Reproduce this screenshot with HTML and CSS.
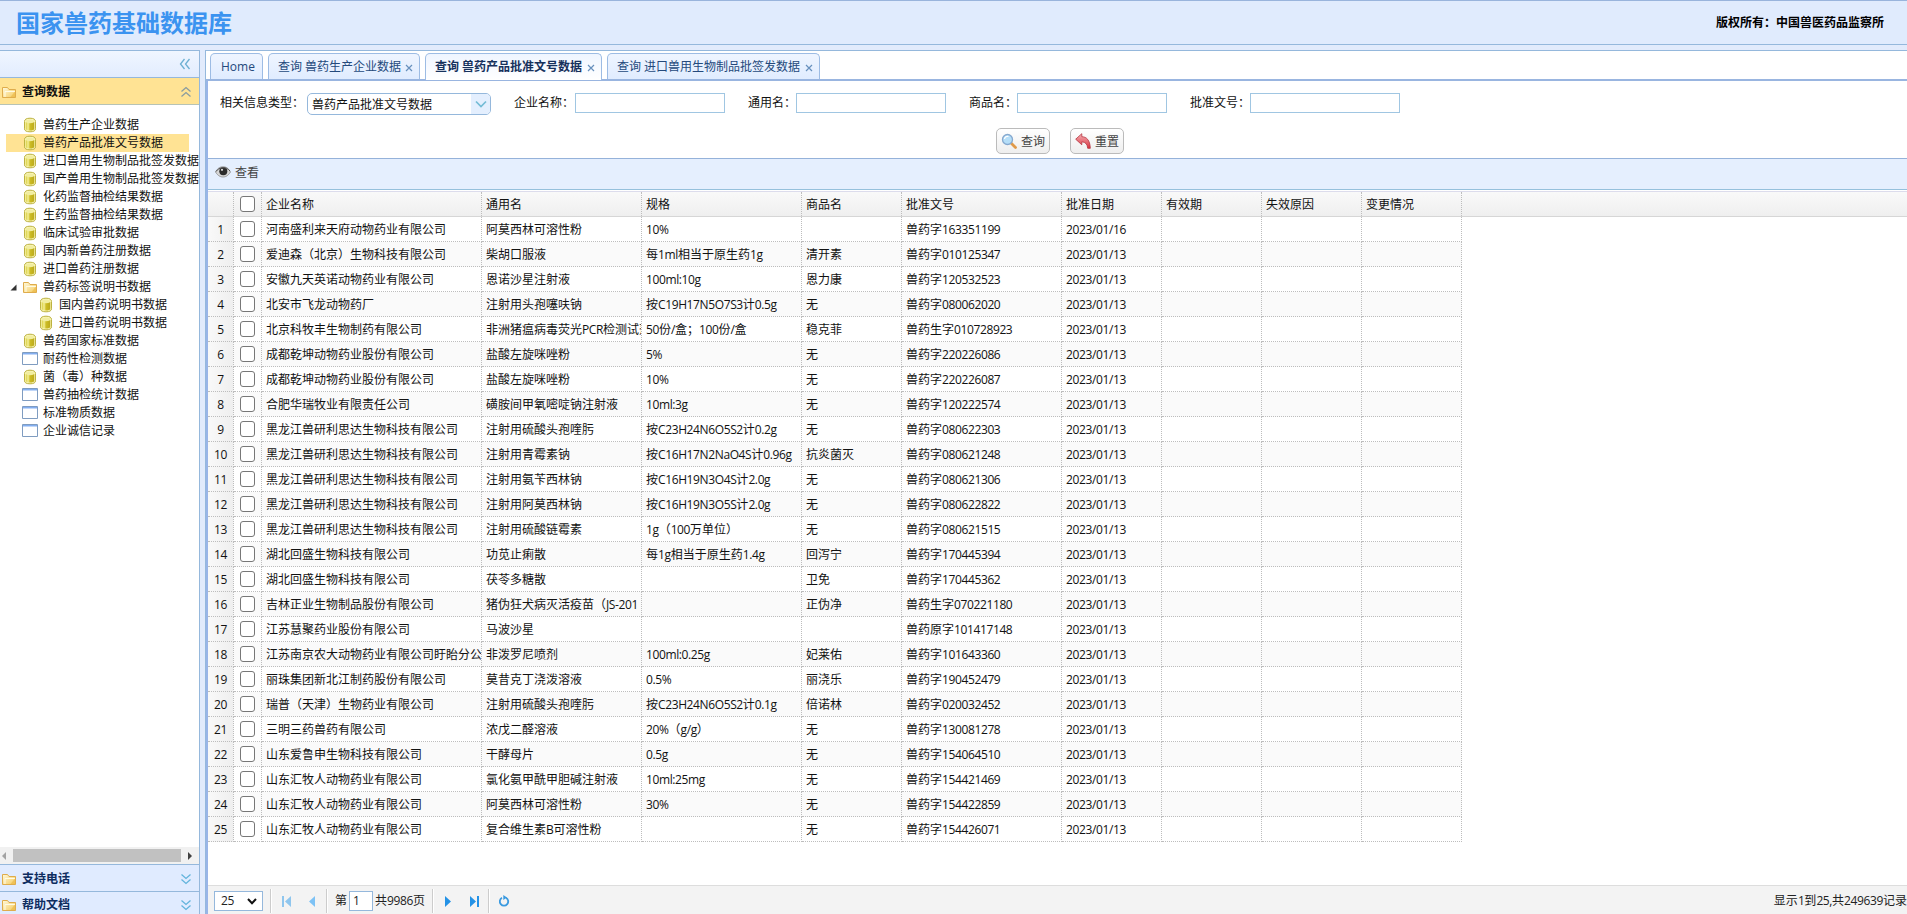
FILE: index.html
```html
<!DOCTYPE html>
<html lang="zh-CN">
<head>
<meta charset="utf-8">
<title>国家兽药基础数据库</title>
<link rel="stylesheet" href="styles.css">
</head>
<body>
<svg class="defs" aria-hidden="true">
  <defs>
    <linearGradient id="gold" x1="0" x2="1" y1="0" y2="0">
      <stop offset="0" stop-color="#d9ce3c"/><stop offset=".28" stop-color="#f3ee98"/><stop offset=".5" stop-color="#cdbd24"/><stop offset="1" stop-color="#bba91c"/>
    </linearGradient>
    <linearGradient id="paper" x1="0" x2="1" y1="0" y2="1">
      <stop offset="0" stop-color="#fff9dc"/><stop offset="1" stop-color="#f5cb5e"/>
    </linearGradient>
    <linearGradient id="red" x1="0" x2="0" y1="0" y2="1">
      <stop offset="0" stop-color="#f6b0b4"/><stop offset="1" stop-color="#d8323f"/>
    </linearGradient>
    <symbol id="db" viewBox="0 0 16 16">
      <path d="M2.500 4.500C2.500 2.300 4.500 1.200 8 1.200s5.500 1.100 5.500 3.300v7.300c0 2-2 3-5.500 3s-5.500-1-5.500-3z" fill="#faf6b8" stroke="#bdb240"/>
      <path d="M3.700 5v6.700c0 1 1.800 1.900 4.300 1.900s4.300-.9 4.300-1.900V5z" fill="url(#gold)"/>
      <ellipse cx="8" cy="4.300" rx="4.300" ry="1.900" fill="#f1eda0"/>
    </symbol>
    <symbol id="folder" viewBox="0 0 16 16">
      <path d="M1.500 13.500v-10h5l1.500 2h6.500v8z" fill="url(#paper)" stroke="#dfac4c"/>
      <path d="M4 13V7.500h10" stroke="#fffbe6" fill="none"/>
      <path d="M14 7.500L9.500 13H14z" fill="#eab544" opacity=".6"/>
    </symbol>
    <symbol id="win" viewBox="0 0 16 16">
      <path d="M.5 1.500h15v12H.5z" fill="#fff" stroke="#7f9cc0"/>
      <path d="M1 2h14v1.500H1z" fill="#83aef0"/>
    </symbol>
    <symbol id="down2" viewBox="0 0 12 12"><path d="M1.500 1.500L6 5.500l4.500-4M1.500 6.500L6 10.500l4.500-4" fill="none" stroke="#62b4dc" stroke-width="1.300"/></symbol>
    <symbol id="up2" viewBox="0 0 12 12"><path d="M1.500 5.500L6 1.500l4.500 4M1.500 10.500L6 6.500l4.500 4" fill="none" stroke="#8a9ca0" stroke-width="1.300"/></symbol>
    <symbol id="left2" viewBox="0 0 12 12"><path d="M5.500 1L1.500 6l4 5M10.500 1l-4 5 4 5" fill="none" stroke="#6cafd2" stroke-width="1.300"/></symbol>
    <symbol id="x" viewBox="0 0 8 8"><path d="M1 1l6 6M7 1L1 7" stroke="#6790bd" stroke-width="1.200"/></symbol>
  </defs>
</svg>

<header class="top">
  <h1>国家兽药基础数据库</h1>
  <div class="copy">版权所有：中国兽医药品监察所</div>
</header>

<div class="body">
  <aside class="side">
    <div class="side-head"><svg class="i12"><use href="#left2"/></svg></div>
    <div class="acc acc-on"><svg class="i16"><use href="#folder"/></svg><b>查询数据</b><svg class="i12"><use href="#up2"/></svg></div>
    <ul class="tree">
      <li><svg class="i16"><use href="#db"/></svg><span>兽药生产企业数据</span></li>
      <li class="sel"><svg class="i16"><use href="#db"/></svg><span>兽药产品批准文号数据</span></li>
      <li><svg class="i16"><use href="#db"/></svg><span>进口兽用生物制品批签发数据</span></li>
      <li><svg class="i16"><use href="#db"/></svg><span>国产兽用生物制品批签发数据</span></li>
      <li><svg class="i16"><use href="#db"/></svg><span>化药监督抽检结果数据</span></li>
      <li><svg class="i16"><use href="#db"/></svg><span>生药监督抽检结果数据</span></li>
      <li><svg class="i16"><use href="#db"/></svg><span>临床试验审批数据</span></li>
      <li><svg class="i16"><use href="#db"/></svg><span>国内新兽药注册数据</span></li>
      <li><svg class="i16"><use href="#db"/></svg><span>进口兽药注册数据</span></li>
      <li class="open"><svg class="tri" viewBox="0 0 7 7"><path d="M6.500 .5v6H.5z" fill="#333"/></svg><svg class="i16"><use href="#folder"/></svg><span>兽药标签说明书数据</span></li>
      <li class="sub"><svg class="i16"><use href="#db"/></svg><span>国内兽药说明书数据</span></li>
      <li class="sub"><svg class="i16"><use href="#db"/></svg><span>进口兽药说明书数据</span></li>
      <li><svg class="i16"><use href="#db"/></svg><span>兽药国家标准数据</span></li>
      <li><svg class="i16"><use href="#win"/></svg><span>耐药性检测数据</span></li>
      <li><svg class="i16"><use href="#db"/></svg><span>菌（毒）种数据</span></li>
      <li><svg class="i16"><use href="#win"/></svg><span>兽药抽检统计数据</span></li>
      <li><svg class="i16"><use href="#win"/></svg><span>标准物质数据</span></li>
      <li><svg class="i16"><use href="#win"/></svg><span>企业诚信记录</span></li>
    </ul>
    <div class="hscroll">
      <svg viewBox="0 0 4 8"><path d="M4 0v8L0 4z" fill="#a3a3a3"/></svg>
      <i></i>
      <svg viewBox="0 0 4 8"><path d="M0 0v8l4-4z" fill="#404040"/></svg>
    </div>
    <div class="acc"><svg class="i16"><use href="#folder"/></svg><b>支持电话</b><svg class="i12"><use href="#down2"/></svg></div>
    <div class="acc acc-last"><svg class="i16"><use href="#folder"/></svg><b>帮助文档</b><svg class="i12"><use href="#down2"/></svg></div>
  </aside>

  <main class="main">
    <nav class="tabs">
      <a class="tab home">Home</a>
      <a class="tab t2">查询 兽药生产企业数据<svg><use href="#x"/></svg></a>
      <a class="tab t3 on">查询 兽药产品批准文号数据<svg><use href="#x"/></svg></a>
      <a class="tab t4">查询 进口兽用生物制品批签发数据<svg><use href="#x"/></svg></a>
    </nav>
    <section class="panel">
      <form class="search">
        <div class="fields">
          <label class="f-type"><span>相关信息类型：</span>
            <span class="combo">兽药产品批准文号数据<i><svg viewBox="0 0 12 8"><path d="M1 1.500l5 5 5-5" fill="none" stroke="#74bcd6" stroke-width="1.700"/></svg></i></span></label>
          <label class="w4"><span>企业名称：</span><input type="text"></label>
          <label class="w3"><span>通用名：</span><input type="text"></label>
          <label class="w3"><span>商品名：</span><input type="text"></label>
          <label class="w4 w4b"><span>批准文号：</span><input type="text"></label>
        </div>
        <div class="buttons">
          <button type="button"><svg viewBox="0 0 16 16"><path d="M10 10l4.500 4.500" stroke="#e09a4a" stroke-width="2.800" stroke-linecap="round"/><circle cx="6.500" cy="6.500" r="5" fill="#b5def8" stroke="#86a9cf" stroke-width="1.300"/><path d="M3.500 6a3 3 0 0 1 4-2.500" fill="none" stroke="#fff" stroke-width="1.300"/></svg>查询</button>
          <button type="button"><svg viewBox="0 0 16 16"><path d="M.7 6.200L6.800 .7v3C11.500 3.800 15 7 15.300 15.300h-2.600C12.500 11.500 10.500 9 6.800 8.800v3z" fill="url(#red)" stroke="#b5323d" stroke-width=".8"/></svg>重置</button>
        </div>
      </form>
      <div class="toolbar">
        <svg viewBox="0 0 16 12"><path d="M.5 6C3 1.500 5.500 .8 8 .8s5 .7 7.500 5.200C13 10 10.500 11 8 11S3 10 .5 6z" fill="#d6d6d6" stroke="#8b8b8b" stroke-width=".8"/><circle cx="8.300" cy="5.200" r="4" fill="#2b2b2b"/><circle cx="7" cy="3.800" r="1.100" fill="#ddd"/><path d="M1 5.500C4 1 11 0 15 5" fill="none" stroke="#555" stroke-width="1"/></svg>
        <span>查看</span>
      </div>
      <div class="grid-head">
        <table class="grid">
          <colgroup><col class="c26"><col class="c28"><col class="c220"><col class="c160"><col class="c160"><col class="c100"><col class="c160"><col class="c100"><col class="c100"><col class="c100"><col class="c100"></colgroup>
          <tr><th></th><th class="ck"><input type="checkbox"></th><th>企业名称</th><th>通用名</th><th>规格</th><th>商品名</th><th>批准文号</th><th>批准日期</th><th>有效期</th><th>失效原因</th><th>变更情况</th></tr>
        </table>
      </div>
      <div class="grid-body">
        <table class="grid">
          <colgroup><col class="c26"><col class="c28"><col class="c220"><col class="c160"><col class="c160"><col class="c100"><col class="c160"><col class="c100"><col class="c100"><col class="c100"><col class="c100"></colgroup>
          <tbody id="rows"></tbody>
        </table>
      </div>
      <footer class="pager">
        <span class="size"><em>25</em><svg viewBox="0 0 10 7"><path d="M1 1l4 4.300L9 1" fill="none" stroke="#111" stroke-width="2"/></svg></span>
        <i class="sep"></i>
        <svg class="first" viewBox="0 0 9 11"><path d="M0 0h2v11H0zM9 0v11L3 5.500z" fill="#8fc6ee"/></svg>
        <svg class="prev" viewBox="0 0 6 11"><path d="M6 0v11L0 5.500z" fill="#7dc2f5"/></svg>
        <i class="sep"></i>
        <span class="pg">第</span><span class="num">1</span><span class="pg all">共<em>9986</em>页</span>
        <i class="sep"></i>
        <svg class="next" viewBox="0 0 6 11"><path d="M0 0v11l6-5.500z" fill="#2492e6"/></svg>
        <svg class="last" viewBox="0 0 9 11"><path d="M7 0h2v11H7zM0 0v11l6-5.500z" fill="#2492e6"/></svg>
        <i class="sep"></i>
        <svg class="reload" viewBox="0 0 12 12"><path d="M4 2.700A4.200 4.200 0 1 0 8 2.700" fill="none" stroke="#3a9ae0" stroke-width="1.800"/><path d="M5.300 0v5l3.700-2.500z" fill="#3a9ae0"/></svg>
        <span class="info">显示<em>1</em>到<em>25,</em>共<em>249639</em>记录</span>
      </footer>
    </section>
  </main>
</div>
<script src="grid.js"></script>
</body>
</html>
```

FILE: styles.css
```css
* { box-sizing: border-box; }
body {
  margin: 0;
  height: 914px;
  overflow: hidden;
  display: flex;
  flex-direction: column;
  background: #e2ebfc;
  color: #222;
  font: 12px/18px "Open Sans", "Noto Sans CJK SC", sans-serif;
}
svg { display: block; flex: none; }
em { font-style: normal; letter-spacing: -.38px; }
.defs { position: absolute; width: 0; height: 0; }
.i16 { width: 16px; height: 16px; }
.i12 { width: 12px; height: 12px; }

.top {
  height: 45px;
  flex: none;
  display: flex;
  justify-content: space-between;
  align-items: center;
  padding: 0 23px 0 16px;
  border-top: 1px solid #99b4dc;
  border-bottom: 1px solid #95b8dc;
  background: #e0ebfd;
}
.top h1 { margin: 0; font-size: 24px; line-height: 36px; font-weight: 700; color: #3b93f0; }
.copy { font-weight: 700; color: #000; }

.body { flex: 1; min-height: 0; display: flex; gap: 5px; margin-top: 5px; }

.side {
  width: 200px;
  flex: none;
  display: flex;
  flex-direction: column;
  border-top: 1px solid #95b8dc;
  border-right: 1px solid #95b8dc;
  background: #fff;
  overflow: hidden;
}
.side-head {
  height: 26px;
  flex: none;
  display: flex;
  align-items: center;
  justify-content: flex-end;
  padding-right: 8px;
  background: linear-gradient(#f0f6ff, #e2ecfe);
}
.acc {
  height: 27px;
  flex: none;
  display: flex;
  align-items: center;
  gap: 5px;
  padding: 1px 7px 0 1px;
  border-top: 1px solid #95b8dc;
  background: #e0ebff;
  color: #0e2d5f;
}
.acc b { flex: 1; font-weight: 700; }
.acc-on { height: 28px; background: #ffe394; color: #111; border-bottom: 1px solid #b7c3b5; }
.acc-last { height: 23px; padding-top: 4px; }
.tree { list-style: none; margin: 0; padding: 11px 10px 0 6px; flex: 1; min-height: 0; }
.tree li {
  height: 18px;
  display: flex;
  align-items: center;
  padding-left: 16px;
  gap: 5px;
  white-space: nowrap;
  color: #111;
}
.tree .i16 { width: 16px; }
.tree li.sub { padding-left: 32px; }
.tree li.sel { background: #ffe394; }
.tree li.open { padding-left: 4px; }
.tree li.open .tri { width: 7px; height: 7px; }
.hscroll {
  height: 17px;
  flex: none;
  display: flex;
  align-items: center;
  justify-content: space-between;
  padding: 0 7px 0 2px;
  background: #f1f1f1;
}
.hscroll svg { width: 4px; height: 8px; }
.hscroll i { width: 168px; height: 13px; margin-right: 1px; background: #c1c1c1; }

.main {
  flex: 1;
  min-width: 0;
  display: flex;
  flex-direction: column;
  border-top: 1px solid #95b8dc;
  border-left: 1px solid #95b8dc;
  background: #fff;
}
.tabs {
  height: 30px;
  flex: none;
  display: flex;
  align-items: flex-end;
  gap: 5px;
  padding-left: 4px;
  border-bottom: 2px solid #99b5e0;
}
.tab {
  height: 26px;
  display: flex;
  align-items: center;
  justify-content: space-between;
  padding: 0 6px 0 9px;
  border: 1px solid #9dbce4;
  border-bottom: 0;
  border-radius: 5px 5px 0 0;
  background: linear-gradient(#eff5ff, #e0ecff);
  color: #24497c;
  white-space: nowrap;
}
.tab svg { width: 8px; height: 8px; margin-top: 2px; }
.home { width: 53px; padding-left: 10px; }
.t2 { width: 152px; }
.t3 { width: 177px; }
.t4 { width: 213px; }
.tab.on {
  font-weight: 700;
  height: 27px;
  margin-bottom: -1px;
  background: linear-gradient(#eff5ff, #fff);
  color: #16315c;
}

.panel {
  flex: 1;
  min-height: 0;
  display: flex;
  flex-direction: column;
  border-left: 2px solid #99b5e8;
}
.search { height: 77px; flex: none; padding: 12px 0 0 12px; }
.fields { display: flex; align-items: flex-start; height: 35px; color: #111; }
.fields label { display: flex; white-space: nowrap; margin-right: 23px; }
.fields label > span:first-child { flex: none; padding-top: 1px; }
.f-type > span:first-child { width: 87px; }
.w4 > span:first-child { width: 61px; }
.w4b > span:first-child { width: 60px; }
.w3 > span:first-child { width: 48px; }
.fields input {
  width: 150px;
  height: 20px;
  padding: 0;
  border: 1px solid #a0c6e2;
  background: #fff;
}
.combo {
  width: 184px;
  height: 22px;
  display: flex;
  justify-content: space-between;
  padding-left: 4px;
  line-height: 21px;
  border: 1px solid #95b8dc;
  border-radius: 5px;
  overflow: hidden;
}
.combo i { width: 19px; display: grid; place-items: center; background: #e4effe; }
.combo svg { width: 12px; height: 8px; }
.buttons { display: flex; gap: 20px; padding-left: 776px; }
.buttons button {
  width: 54px;
  height: 26px;
  display: flex;
  align-items: center;
  gap: 4px;
  padding: 1px 0 0 4px;
  border: 1px solid #bbb;
  border-radius: 5px;
  background: linear-gradient(#fff, #eee);
  color: #444;
  font: inherit;
  white-space: nowrap;
}
.buttons svg { width: 16px; height: 16px; margin-top: -2px; }

.toolbar {
  height: 32px;
  flex: none;
  display: flex;
  align-items: center;
  gap: 4px;
  padding: 0 0 2px 7px;
  border-top: 1px solid #95b2da;
  border-bottom: 1px solid #95c0dc;
  background: #e5effe;
  color: #444;
}
.toolbar svg { width: 16px; height: 12px; margin-top: -3px; }

.grid-head {
  height: 26px;
  flex: none;
  margin-top: 1px;
  border-top: 1px solid #dcdcec;
  border-bottom: 1px solid #d6d6d6;
  background: linear-gradient(#f9f9f9, #efefef);
}
.grid-body { flex: 1; min-height: 0; overflow: hidden; }
.grid { width: 1254px; table-layout: fixed; border-collapse: separate; border-spacing: 0; }
.grid th, .grid td {
  height: 25px;
  padding: 2px 0 0 4px;
  border-right: 1px dotted #bdbdbd;
  border-bottom: 1px dotted #bdbdbd;
  font-weight: 400;
  text-align: left;
  white-space: nowrap;
  overflow: hidden;
  line-height: 18px;
  color: #111;
}
.grid th { height: 24px; border-bottom: 0; }
.grid tbody#rows tr:nth-child(even) { background: #fafafa; }
.grid .no { padding: 2px 0 0; text-align: center; background: linear-gradient(90deg, #f9f9f9, #efefef); }
.grid .ck { padding: 0 0 1px 6px; }
.grid .ck input {
  display: block;
  appearance: none;
  width: 15px;
  height: 16px;
  margin: 0;
  border: 1px solid #777;
  border-radius: 3px;
  background: #fff;
}
.c26 { width: 26px; } .c28 { width: 28px; } .c100 { width: 100px; } .c160 { width: 160px; } .c220 { width: 220px; }

.pager {
  height: 29px;
  flex: none;
  display: flex;
  align-items: center;
  padding: 2px 0 0 6px;
  border-top: 1px solid #ddd;
  background: #f3f3f3;
}
.size {
  width: 49px;
  height: 20px;
  display: flex;
  align-items: center;
  justify-content: space-between;
  padding: 0 5px 0 6px;
  border: 1px solid #95b8dc;
  background: #fff;
}
.size svg { width: 10px; height: 7px; }
.sep { width: 2px; height: 24px; margin-left: 7px; border-left: 1px solid #ccc; border-right: 1px solid #fff; }
.first { width: 9px; height: 11px; margin-left: 10px; }
.prev { width: 6px; height: 11px; margin-left: 18px; }
.prev + .sep { margin-left: 11px; }
.pg { margin-left: 7px; }
.num { width: 24px; height: 20px; margin-left: 2px; padding-left: 3px; border: 1px solid #95b8dc; background: #fff; }
.pg.all { margin-left: 2px; }
.next { width: 6px; height: 11px; margin-left: 11px; }
.last { width: 9px; height: 11px; margin-left: 19px; }
.last + .sep { margin-left: 9px; }
.reload { width: 12px; height: 12px; margin-left: 8px; }
.info { margin-left: auto; }
```

FILE: grid.js
```js
// company | generic name | spec | trade name | approval number | date
const data = `河南盛利来天府动物药业有限公司|阿莫西林可溶性粉|10%||兽药字163351199|2023/01/16
爱迪森（北京）生物科技有限公司|柴胡口服液|每1ml相当于原生药1g|清开素|兽药字010125347
安徽九天英诺动物药业有限公司|恩诺沙星注射液|100ml:10g|恩力康|兽药字120532523
北安市飞龙动物药厂|注射用头孢噻呋钠|按C19H17N5O7S3计0.5g|无|兽药字080062020
北京科牧丰生物制药有限公司|非洲猪瘟病毒荧光PCR检测试剂|50份/盒；100份/盒|稳克菲|兽药生字010728923
成都乾坤动物药业股份有限公司|盐酸左旋咪唑粉|5%|无|兽药字220226086
成都乾坤动物药业股份有限公司|盐酸左旋咪唑粉|10%|无|兽药字220226087
合肥华瑞牧业有限责任公司|磺胺间甲氧嘧啶钠注射液|10ml:3g|无|兽药字120222574
黑龙江兽研利思达生物科技有限公司|注射用硫酸头孢喹肟|按C23H24N6O5S2计0.2g|无|兽药字080622303
黑龙江兽研利思达生物科技有限公司|注射用青霉素钠|按C16H17N2NaO4S计0.96g|抗炎菌灭|兽药字080621248
黑龙江兽研利思达生物科技有限公司|注射用氨苄西林钠|按C16H19N3O4S计2.0g|无|兽药字080621306
黑龙江兽研利思达生物科技有限公司|注射用阿莫西林钠|按C16H19N3O5S计2.0g|无|兽药字080622822
黑龙江兽研利思达生物科技有限公司|注射用硫酸链霉素|1g（100万单位）|无|兽药字080621515
湖北回盛生物科技有限公司|功苋止痢散|每1g相当于原生药1.4g|回泻宁|兽药字170445394
湖北回盛生物科技有限公司|茯苓多糖散||卫免|兽药字170445362
吉林正业生物制品股份有限公司|猪伪狂犬病灭活疫苗（JS-201||正伪净|兽药生字070221180
江苏慧聚药业股份有限公司|马波沙星|||兽药原字101417148
江苏南京农大动物药业有限公司盱眙分公|非泼罗尼喷剂|100ml:0.25g|妃莱佑|兽药字101643360
丽珠集团新北江制药股份有限公司|莫昔克丁浇泼溶液|0.5%|丽浇乐|兽药字190452479
瑞普（天津）生物药业有限公司|注射用硫酸头孢喹肟|按C23H24N6O5S2计0.1g|倍诺林|兽药字020032452
三明三药兽药有限公司|浓戊二醛溶液|20%（g/g）|无|兽药字130081278
山东爱鲁申生物科技有限公司|干酵母片|0.5g|无|兽药字154064510
山东汇牧人动物药业有限公司|氯化氨甲酰甲胆碱注射液|10ml:25mg|无|兽药字154421469
山东汇牧人动物药业有限公司|阿莫西林可溶性粉|30%|无|兽药字154422859
山东汇牧人动物药业有限公司|复合维生素B可溶性粉||无|兽药字154426071`;

// Latin runs sit slightly tighter than the surrounding Chinese text.
const tighten = s => s.replace(/[\x21-\x7e]+/g, m => `<em>${m}</em>`);

document.getElementById('rows').innerHTML = data.split('\n').map((line, i) => {
  const cells = line.split('|');
  if (cells.length < 6) cells.push('2023/01/13');
  while (cells.length < 9) cells.push('');
  return `<tr><td class="no"><em>${i + 1}</em></td><td class="ck"><input type="checkbox"></td>` +
    cells.map(c => `<td>${tighten(c)}</td>`).join('') + '</tr>';
}).join('');
```
